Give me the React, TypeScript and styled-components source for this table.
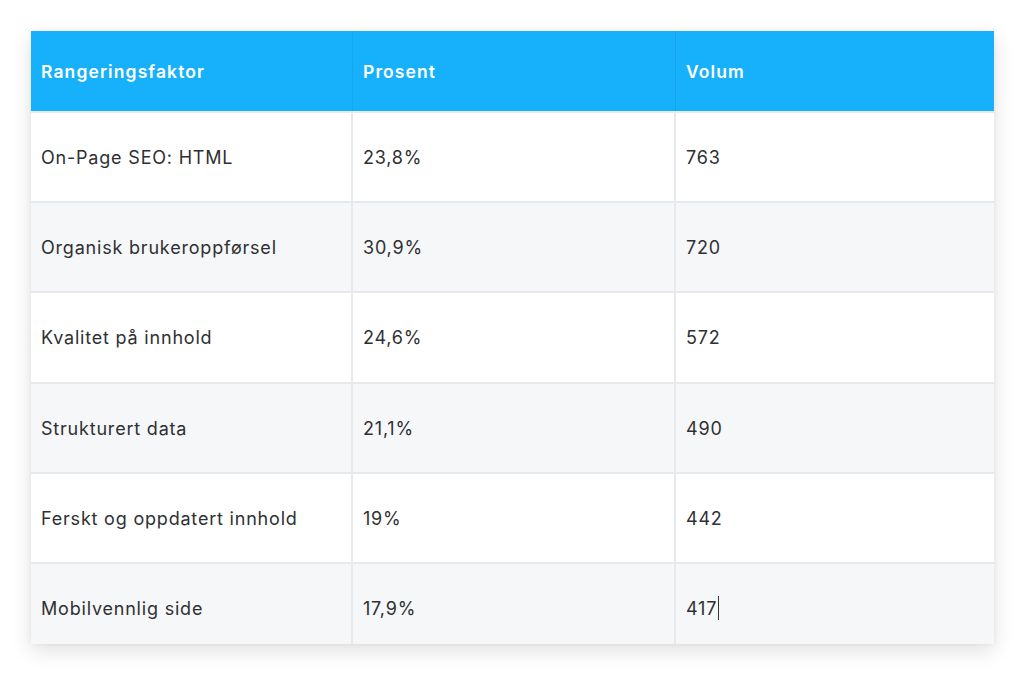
import React from "react";
import styled, { createGlobalStyle } from "styled-components";

const Global = createGlobalStyle`
  html, body { margin: 0; padding: 0; background: #ffffff; }
  body { font-family: Inter, "Noto Sans", sans-serif; }
`;

const Page = styled.div`
  width: 1024px;
  height: 675px;
  box-sizing: border-box;
  padding: 31px 30px 0 31px;
  background: #ffffff;
`;

const Card = styled.div`
  width: 963px;
  background: #ffffff;
  box-shadow: 0 7px 20px rgba(0, 0, 0, 0.12), 0 0 6px rgba(0, 0, 0, 0.05);
`;

const Table = styled.div`
  display: grid;
  grid-template-columns: 322px 323px 318px;
`;

const HeadCell = styled.div<{ $last?: boolean }>`
  height: 80px;
  display: flex;
  align-items: center;
  padding: 0 10px;
  background: #17b0fb;
  color: #ffffff;
  font-weight: 600;
  font-size: 17.5px;
  letter-spacing: 1.1px;
  border-right: ${(p) => (p.$last ? "none" : "1px solid #13a4ea")};
`;

const Cell = styled.div<{ $alt: boolean; $last?: boolean; $h: number; $shift: number }>`
  height: ${(p) => p.$h}px;
  box-sizing: border-box;
  display: flex;
  align-items: center;
  padding: ${(p) => p.$shift}px 10px 0;
  background: ${(p) => (p.$alt ? "#f6f7f9" : "#ffffff")};
  color: #2f3033;
  font-size: 18px;
  letter-spacing: 0.8px;
  border-top: 2px solid #e8e9ed;
  border-right: ${(p) => (p.$last ? "none" : "2px solid #e8e9ed")};
`;

const Caret = styled.span`
  display: inline-block;
  width: 1px;
  height: 24px;
  background: #333;
  margin-left: 1px;
`;

const rows = [
  ["On-Page SEO: HTML", "23,8%", "763"],
  ["Organisk brukeroppførsel", "30,9%", "720"],
  ["Kvalitet på innhold", "24,6%", "572"],
  ["Strukturert data", "21,1%", "490"],
  ["Ferskt og oppdatert innhold", "19%", "442"],
  ["Mobilvennlig side", "17,9%", "417"],
];
const heights = [90, 90, 91, 90, 90, 82];

export default function App() {
  return (
    <>
      <Global />
      <Page>
        <Card>
          <Table>
            <HeadCell>Rangeringsfaktor</HeadCell>
            <HeadCell>Prosent</HeadCell>
            <HeadCell $last>Volum</HeadCell>
            {rows.map((r, i) =>
              r.map((c, j) => (
                <Cell
                  key={`${i}-${j}`}
                  $alt={i % 2 === 1}
                  $last={j === 2}
                  $h={heights[i]}
                  $shift={i === rows.length - 1 ? 8 : 0}
                >
                  {c}
                  {i === rows.length - 1 && j === 2 ? <Caret /> : null}
                </Cell>
              ))
            )}
          </Table>
        </Card>
      </Page>
    </>
  );
}
